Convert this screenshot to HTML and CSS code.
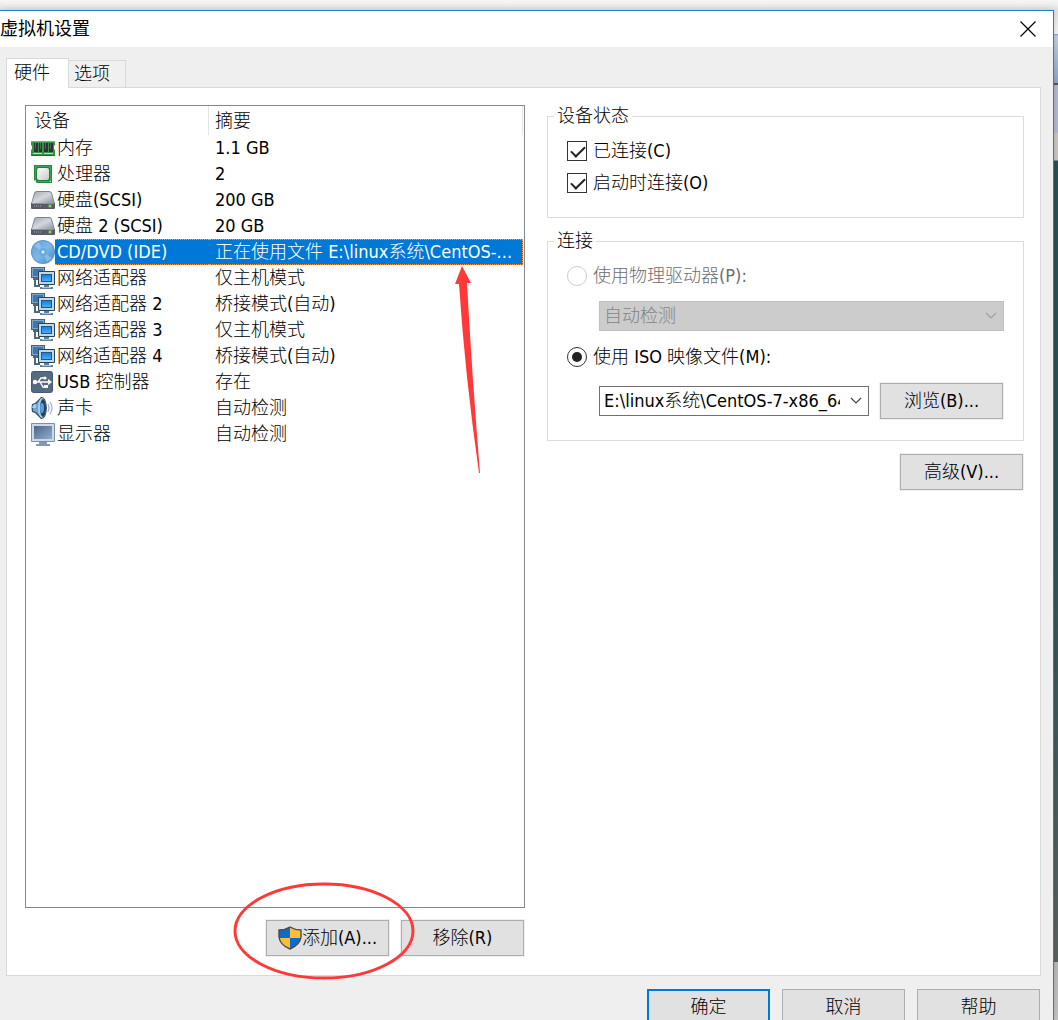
FILE: index.html
```html
<!DOCTYPE html>
<html lang="zh-CN">
<head>
    <meta charset="UTF-8">
    <meta name="viewport" content="width=device-width, initial-scale=1.0">
    <title>虚拟机设置</title>
    <link rel="stylesheet" href="styles.css">
</head>
<body>
    <!-- shared icons -->
    <svg class="defs" width="0" height="0">
        <defs>
            <linearGradient id="diskTop" x1="0" y1="0" x2="1" y2="1">
                <stop offset="0" stop-color="#a4aab3"/>
                <stop offset="0.5" stop-color="#d3d7dd"/>
                <stop offset="1" stop-color="#8b929d"/>
            </linearGradient>
            <linearGradient id="screen" x1="0" y1="0" x2="0" y2="1">
                <stop offset="0" stop-color="#1580ea"/>
                <stop offset="1" stop-color="#46adf8"/>
            </linearGradient>
            <linearGradient id="monitor" x1="0" y1="0" x2="1" y2="1">
                <stop offset="0" stop-color="#48678f"/>
                <stop offset="1" stop-color="#93adca"/>
            </linearGradient>
            <linearGradient id="disc" x1="0" y1="0" x2="1" y2="1">
                <stop offset="0" stop-color="#5a9fd6"/>
                <stop offset="0.5" stop-color="#7fb9e8"/>
                <stop offset="1" stop-color="#4388c6"/>
            </linearGradient>
            <linearGradient id="chip" x1="0" y1="0" x2="1" y2="1">
                <stop offset="0" stop-color="#ffffff"/>
                <stop offset="1" stop-color="#c9c9c9"/>
            </linearGradient>
        </defs>
        <symbol id="i-memory" viewBox="0 0 24 24">
            <path d="M0 5h24v4l-1 1v3l1 1v5H0v-5l1-1v-3l-1-1z" fill="#35944a"/>
            <path d="M0 5h24v1H0z" fill="#6dbb7b"/>
            <path d="M3 7h4v9H3zM8 7h3v9H8zM13 7h4v9h-4zM18 7h4v9h-4z" fill="#303136"/>
            <path d="M4 7h1v6H4zM9 7h1v6H9zM14 7h1v6h-1zM19 7h1v6h-1z" fill="#5d5d63"/>
            <path d="M2 17h9v1H2zM13 17h9v1h-9z" fill="#e2d56c"/>
            <path d="M0 19h24v1H0z" fill="#1d6c30"/>
        </symbol>
        <symbol id="i-cpu" viewBox="0 0 24 24">
            <path d="M3 3h18v18H6l-3-3z" fill="#25883e"/>
            <path d="M4 4h16v16H7l-3-3z" fill="#3ca657"/>
            <rect x="5" y="5" width="14" height="14" rx="2" fill="#267c3c"/>
            <rect x="6" y="6" width="12" height="12" rx="2" fill="url(#chip)"/>
            <path d="M4 18h1v2H4zM19 19h1v1h-1z" fill="#d9e683"/>
        </symbol>
        <symbol id="i-disk" viewBox="0 0 24 24">
            <path d="M3 5q1-2 3-2h12q2 0 3 2l3 11H0z" fill="#7c828c"/>
            <path d="M4 5q1-1 2-1h12q1 0 2 1l3 10H1z" fill="url(#diskTop)"/>
            <path d="M0 15h24v5q0 1-1 1H1q-1 0-1-1z" fill="#575c66"/>
            <path d="M1 15h22v1H1z" fill="#8f959e"/>
            <path d="M3 17h1v2H3zM5 17h1v2H5zM7 17h1v2H7zM9 17h1v2H9z" fill="#7d838d"/>
            <path d="M17 16h4v4h-4z" fill="#5e7f57"/>
            <circle cx="19" cy="18" r="1" fill="#b7f26d"/>
        </symbol>
        <symbol id="i-cd" viewBox="0 0 24 24">
            <circle cx="12" cy="12" r="12" fill="#5795ca"/>
            <circle cx="12" cy="12" r="11" fill="url(#disc)"/>
            <path d="M12 12L3 6a11 11 0 0 1 5-4zM12 12l9 6a11 11 0 0 1-5 4z" fill="#a9d5f5" opacity="0.5"/>
            <circle cx="12" cy="12" r="4" fill="#6aa9dd"/>
            <circle cx="12" cy="12" r="2" fill="#97c8ee"/>
            <circle cx="12" cy="12" r="1" fill="#f4faff"/>
        </symbol>
        <symbol id="i-net" viewBox="0 0 24 24">
            <path d="M0 1h14v11H0z" fill="#40658a"/>
            <path d="M1 2h12v9H1z" fill="#7fa6c9"/>
            <path d="M2 3h10v7H2z" fill="#3a79b0"/>
            <path d="M3 12h2v7h4v2H3zM2 12h6v2H2z" fill="#4b6a82"/>
            <rect x="7" y="5" width="17" height="14" rx="1" fill="#24445f"/>
            <path d="M8 6h15v12H8z" fill="#c2d8ea"/>
            <path d="M10 8h11v8H10z" fill="#27567d"/>
            <path d="M11 9h9v6h-9z" fill="url(#screen)"/>
            <path d="M13 19h5v2h4v2H9v-2h4z" fill="#5f7f9a"/>
            <path d="M11 21h9v1h-9z" fill="#a9c6de"/>
        </symbol>
        <symbol id="i-usb" viewBox="0 0 24 24">
            <rect x="0" y="1" width="22" height="22" rx="3" fill="#465a72"/>
            <rect x="1" y="2" width="20" height="20" rx="2" fill="#566a81"/>
            <path d="M3 12h14M7 12l3-4h3M9 12l3 5h3" fill="none" stroke="#fff" stroke-width="1.3"/>
            <circle cx="4" cy="12" r="2.2" fill="#fff"/>
            <circle cx="14" cy="8" r="1.6" fill="#fff"/>
            <path d="M13 15h4v3h-4zM17 9l4 3-4 3z" fill="#fff"/>
        </symbol>
        <symbol id="i-sound" viewBox="0 0 24 24">
            <path d="M1 8l3-1 6-6q5-1 6 11-1 12-6 11l-6-6-3-1q-1-4 0-8z" fill="#34536f"/>
            <path d="M2 9l3-1 4-4v16l-4-4-3-1z" fill="#6fa4d8"/>
            <path d="M2 9l3-1v4H1z" fill="#a8cdf0"/>
            <ellipse cx="11" cy="12" rx="4" ry="10" fill="#a7cdef"/>
            <ellipse cx="12" cy="12" rx="3" ry="9" fill="#25415c"/>
            <ellipse cx="11" cy="12" rx="2" ry="5" fill="#5a9de0"/>
            <path d="M17 8q2 4 0 8M19 6q4 6 0 12" fill="none" stroke="#9cb4ca" stroke-width="1.2"/>
        </symbol>
        <symbol id="i-display" viewBox="0 0 24 24">
            <rect x="0" y="1" width="24" height="19" rx="1" fill="#7890a8"/>
            <path d="M1 2h22v17H1z" fill="#ccdae7"/>
            <path d="M3 4h18v13H3z" fill="url(#monitor)"/>
            <path d="M8 20h8v2h3v2H5v-2h3z" fill="#8398ac"/>
        </symbol>
        <symbol id="i-chevron" viewBox="0 0 12 8">
            <path d="M1 1l5 5 5-5" fill="none" stroke="currentColor" stroke-width="1.2"/>
        </symbol>
    </svg>

    <div class="dialog">
        <div class="titlebar">
            <h1>虚拟机设置</h1>
            <button class="close" aria-label="关闭">
                <svg width="16" height="16" viewBox="0 0 16 16"><path d="M0.5 0.5l15 15M15.5 0.5l-15 15" stroke="#000" stroke-width="1.2"/></svg>
            </button>
        </div>

        <div class="tabs">
            <button class="tab active">硬件</button>
            <button class="tab">选项</button>
        </div>

        <div class="panel">
            <div class="left">
                <div class="devices">
                    <table>
                        <colgroup>
                            <col class="col-icon">
                            <col class="col-name">
                            <col>
                        </colgroup>
                        <thead>
                            <tr>
                                <th colspan="2">设备</th>
                                <th>摘要</th>
                            </tr>
                        </thead>
                        <tbody>
                            <tr>
                                <td><svg class="icon"><use href="#i-memory"/></svg></td>
                                <td>内存</td>
                                <td>1.1 GB</td>
                            </tr>
                            <tr>
                                <td><svg class="icon"><use href="#i-cpu"/></svg></td>
                                <td>处理器</td>
                                <td>2</td>
                            </tr>
                            <tr>
                                <td><svg class="icon"><use href="#i-disk"/></svg></td>
                                <td>硬盘(SCSI)</td>
                                <td>200 GB</td>
                            </tr>
                            <tr>
                                <td><svg class="icon"><use href="#i-disk"/></svg></td>
                                <td>硬盘 2 (SCSI)</td>
                                <td>20 GB</td>
                            </tr>
                            <tr class="selected">
                                <td><svg class="icon"><use href="#i-cd"/></svg></td>
                                <td>CD/DVD (IDE)</td>
                                <td>正在使用文件 E:\linux系统\CentOS-...</td>
                            </tr>
                            <tr>
                                <td><svg class="icon"><use href="#i-net"/></svg></td>
                                <td>网络适配器</td>
                                <td>仅主机模式</td>
                            </tr>
                            <tr>
                                <td><svg class="icon"><use href="#i-net"/></svg></td>
                                <td>网络适配器 2</td>
                                <td>桥接模式(自动)</td>
                            </tr>
                            <tr>
                                <td><svg class="icon"><use href="#i-net"/></svg></td>
                                <td>网络适配器 3</td>
                                <td>仅主机模式</td>
                            </tr>
                            <tr>
                                <td><svg class="icon"><use href="#i-net"/></svg></td>
                                <td>网络适配器 4</td>
                                <td>桥接模式(自动)</td>
                            </tr>
                            <tr>
                                <td><svg class="icon"><use href="#i-usb"/></svg></td>
                                <td>USB 控制器</td>
                                <td>存在</td>
                            </tr>
                            <tr>
                                <td><svg class="icon"><use href="#i-sound"/></svg></td>
                                <td>声卡</td>
                                <td>自动检测</td>
                            </tr>
                            <tr>
                                <td><svg class="icon"><use href="#i-display"/></svg></td>
                                <td>显示器</td>
                                <td>自动检测</td>
                            </tr>
                        </tbody>
                    </table>
                    <svg class="arrow" width="28" height="210" viewBox="0 0 28 210">
                        <path d="M8 1L17 18L13 18Q18 110 26 208L25 208Q11 110 5 19L1 19z" fill="#ff3838"/>
                    </svg>
                </div>
                <div class="actions">
                    <div class="marked">
                        <button class="btn">
                            <svg class="shield" width="24" height="24" viewBox="0 0 24 24">
                                <path d="M12 1Q7 4 1 4V11Q2 19 12 23Q22 19 23 11V4Q17 4 12 1z" fill="#ffbd36"/>
                                <path d="M12 1Q7 4 1 4V12H12zM12 12H23Q21 19 12 23z" fill="#0a6bc9"/>
                                <path d="M12 1Q7 4 1 4V11Q2 19 12 23Q22 19 23 11V4Q17 4 12 1z" fill="none" stroke="#4a4a4a" stroke-width="1.4"/>
                            </svg>添加(A)...
                        </button>
                        <svg class="circle" width="184" height="100" viewBox="0 0 184 100">
                            <ellipse cx="92" cy="50" rx="89" ry="47" fill="none" stroke="#ff3838" stroke-width="3"/>
                        </svg>
                    </div>
                    <button class="btn">移除(R)</button>
                </div>
            </div>

            <div class="right">
                <fieldset>
                    <legend>设备状态</legend>
                    <label class="option"><input type="checkbox" checked>已连接(C)</label>
                    <label class="option"><input type="checkbox" checked>启动时连接(O)</label>
                </fieldset>

                <fieldset>
                    <legend>连接</legend>
                    <label class="option disabled"><input type="radio" name="source" disabled>使用物理驱动器(P):</label>
                    <div class="source">
                        <div class="combo disabled">
                            <select aria-label="物理驱动器" disabled>
                                <option>自动检测</option>
                            </select>
                            <svg width="12" height="8"><use href="#i-chevron"/></svg>
                        </div>
                    </div>
                    <label class="option"><input type="radio" name="source" checked>使用 ISO 映像文件(M):</label>
                    <div class="source">
                        <div class="combo">
                            <select aria-label="ISO 映像文件">
                                <option>E:\linux系统\CentOS-7-x86_64.iso</option>
                            </select>
                            <svg width="12" height="8"><use href="#i-chevron"/></svg>
                        </div>
                        <button class="btn">浏览(B)...</button>
                    </div>
                </fieldset>

                <button class="btn advanced">高级(V)...</button>
            </div>
        </div>

        <div class="footer">
            <button class="btn default">确定</button>
            <button class="btn">取消</button>
            <button class="btn">帮助</button>
        </div>
    </div>
</body>
</html>
```

FILE: styles.css
```css
* {
    box-sizing: border-box;
}
body {
    margin: 0;
    height: 100vh;
    padding: 10px 4px 0 0;
    overflow: hidden;
    font-family: "DejaVu Sans Condensed", "Noto Sans CJK SC", sans-serif;
    font-size: 18px;
    font-weight: 300;
    line-height: 24px;
    color: #000;
    /* windows behind the dialog */
    background: linear-gradient(#f7f7f7 0, #e2e2e2 10px, #f4f4f4 34px, #7f9dbd 34px, #c3cfde 36px, #8fa6c4 83px, #555 83px, #555 85px, #b4b8cd 85px, #b4b8cd 133px, #c8c5c3 133px, #c8c5c3 160px, #2c5054 161px, #2c5054 500px, #59615f 962px, #b8b8b8 962px, #c4c4c4 100%);
}
button, select, input {
    font: inherit;
    color: inherit;
    margin: 0;
}
.defs {
    position: absolute;
}
.dialog {
    height: 100%;
    display: flex;
    flex-direction: column;
    background-color: #efefef;
    border-top: 1px solid #1a82d8;
    border-right: 1px solid #1a82d8;
    box-shadow: 0 0 6px rgba(0,0,0,0.15);
}
.titlebar {
    display: flex;
    align-items: center;
    justify-content: space-between;
    height: 36px;
    padding-right: 17px;
    background-color: white;
}
h1 {
    margin: 0;
    font-size: 18px;
    font-weight: 400;
}
.close {
    display: flex;
    padding: 0;
    border: none;
    background: none;
}

/* tabs */
.tabs {
    display: flex;
    align-items: flex-end;
    height: 40px;
    padding-left: 6px;
}
.tab {
    width: 57px;
    height: 27px;
    padding: 0 0 0 5px;
    border: 1px solid #d9d9d9;
    border-left: none;
    border-bottom: none;
    background-color: #f0f0f0;
    text-align: left;
}
.tab.active {
    position: relative;
    width: 63px;
    height: 30px;
    margin-bottom: -1px;
    padding: 0 0 2px 7px;
    border-left: 1px solid #d9d9d9;
    background-color: white;
}
.panel {
    flex: 1;
    min-height: 0;
    display: grid;
    grid-template-columns: 500fr 477fr;
    gap: 22px;
    margin: 0 12px 0 6px;
    padding: 17px 16px 18px 18px;
    border: 1px solid #d9d9d9;
    background-color: white;
}

/* device list */
.left {
    display: flex;
    flex-direction: column;
    gap: 11px;
    min-width: 0;
}
.devices {
    position: relative;
    flex: 1;
    padding-right: 1px;
    border: 1px solid #828790;
}
table {
    width: 100%;
    table-layout: fixed;
    border-spacing: 0;
}
.col-icon {
    width: 29px;
}
.col-name {
    width: 154px;
}
th {
    height: 29px;
    padding: 1px 0 0 8px;
    border-right: 1px solid #e5e5e5;
    font-weight: inherit;
    text-align: left;
}
th + th {
    padding-left: 6px;
}
td {
    height: 26px;
    padding: 0 0 0 2px;
    line-height: 24px;
    white-space: nowrap;
    border: 1px none #ff9a3c;
}
td:first-child {
    padding-left: 5px;
}
td:last-child {
    padding-left: 6px;
}
.icon {
    display: block;
    width: 24px;
    height: 24px;
}
.selected td + td {
    background-color: #0078d7;
    color: white;
    border-top-style: dotted;
    border-bottom-style: dotted;
}
.selected td:last-child {
    border-right-style: dotted;
}
.arrow {
    position: absolute;
    top: 159px;
    right: 42px;
}
.actions {
    display: flex;
    justify-content: flex-end;
    gap: 10px;
}
.marked {
    position: relative;
}
.circle {
    position: absolute;
    top: -38px;
    left: -33px;
    pointer-events: none;
}
.btn {
    display: flex;
    align-items: center;
    justify-content: center;
    flex: none;
    width: 123px;
    height: 36px;
    margin: 1px;
    padding: 0;
    border: 1px solid #adadad;
    background-color: #e1e1e1;
    box-shadow: 0 0 0 1px #f0f0f0;
}
.btn.default {
    border: 2px solid #0078d7;
}

/* device settings */
.right {
    display: flex;
    flex-direction: column;
    gap: 12px;
    min-width: 0;
}
fieldset {
    min-width: 0;
    margin: 0;
    padding: 8px 19px 18px 6px;
    border: 1px solid #dcdcdc;
}
legend {
    padding: 0 3px;
    line-height: 22px;
}
.option {
    display: flex;
    align-items: center;
    gap: 6px;
    height: 32px;
    margin-left: 13px;
}
.option.disabled {
    color: #6d6d6d;
}
.option input {
    appearance: none;
    position: relative;
    width: 20px;
    height: 20px;
    border: 1px solid #333;
    background-color: white;
}
.option input[type="radio"] {
    border-radius: 50%;
}
.option input:disabled {
    border-color: #ccc;
}
.option input[type="checkbox"]:checked::before {
    content: "";
    position: absolute;
    top: 1px;
    left: 6px;
    width: 6px;
    height: 12px;
    border: solid #222;
    border-width: 0 2px 2px 0;
    transform: rotate(45deg);
}
.option input[type="radio"]:checked::before {
    content: "";
    position: absolute;
    inset: 4px;
    border-radius: 50%;
    background-color: #222;
}
.source {
    display: flex;
    align-items: center;
    gap: 10px;
    margin: 9px 0 10px 45px;
}
.source:last-child {
    margin-bottom: 2px;
}
.combo {
    position: relative;
    flex: 1;
    min-width: 0;
}
.combo select {
    appearance: none;
    display: block;
    width: 100%;
    height: 30px;
    padding: 0 28px 0 4px;
    border: 1px solid #707070;
    border-radius: 0;
    background-color: white;
}
.combo.disabled select {
    border-color: #bfbfbf;
    background-color: #ccc;
    color: #838383;
    opacity: 1;
}
.combo svg {
    position: absolute;
    top: 11px;
    right: 7px;
    color: #444;
    pointer-events: none;
}
.combo.disabled svg {
    color: #a0a0a0;
}
.advanced {
    align-self: flex-end;
}
.footer {
    display: flex;
    justify-content: flex-end;
    gap: 10px;
    height: 44px;
    padding: 12px 12px 0 0;
}
```
